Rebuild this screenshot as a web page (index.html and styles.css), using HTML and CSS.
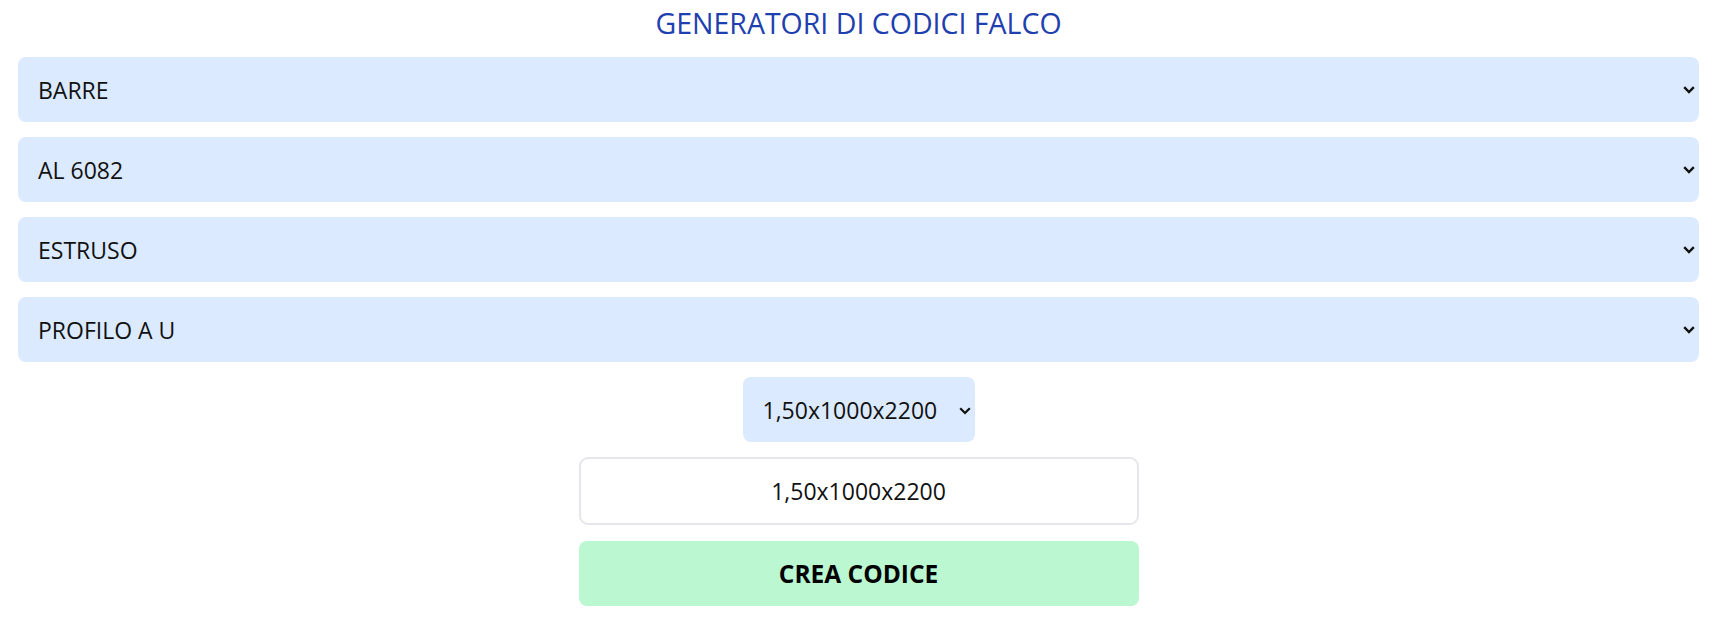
FILE: index.html
```html
<!DOCTYPE html>
<html lang="it">
<head>
<meta charset="utf-8">
<title>Generatori di codici Falco</title>
<link rel="stylesheet" href="styles.css">
</head>
<body>
<div class="page">
  <h1 class="title">GENERATORI DI CODICI FALCO</h1>
  <div class="selects">
    <div class="select-wrap">
      <select class="field"><option>BARRE</option></select>
      <svg class="chev" width="12" height="8" viewBox="0 0 12 8"><path d="M1.2 1.2 L6 6 L10.8 1.2" fill="none" stroke="#111" stroke-width="2.4"/></svg>
    </div>
    <div class="select-wrap">
      <select class="field"><option>AL 6082</option></select>
      <svg class="chev" width="12" height="8" viewBox="0 0 12 8"><path d="M1.2 1.2 L6 6 L10.8 1.2" fill="none" stroke="#111" stroke-width="2.4"/></svg>
    </div>
    <div class="select-wrap">
      <select class="field"><option>ESTRUSO</option></select>
      <svg class="chev" width="12" height="8" viewBox="0 0 12 8"><path d="M1.2 1.2 L6 6 L10.8 1.2" fill="none" stroke="#111" stroke-width="2.4"/></svg>
    </div>
    <div class="select-wrap">
      <select class="field"><option>PROFILO A U</option></select>
      <svg class="chev" width="12" height="8" viewBox="0 0 12 8"><path d="M1.2 1.2 L6 6 L10.8 1.2" fill="none" stroke="#111" stroke-width="2.4"/></svg>
    </div>
  </div>
  <div class="lower">
    <div class="select-wrap small">
      <select class="field"><option>1,50x1000x2200</option></select>
      <svg class="chev" width="12" height="8" viewBox="0 0 12 8"><path d="M1.2 1.2 L6 6 L10.8 1.2" fill="none" stroke="#111" stroke-width="2.2"/></svg>
    </div>
    <input class="code" type="text" value="1,50x1000x2200">
    <button class="create" type="button">CREA CODICE</button>
  </div>
</div>
</body>
</html>
```

FILE: styles.css
```css
html, body {
  margin: 0;
  padding: 0;
  background: #ffffff;
}
body {
  font-family: "Open Sans", "Noto Sans", sans-serif;
  color: #111111;
}
.page {
  padding: 3px 19px 0 18px;
}
.title {
  margin: 0 0 14px 0;
  font-size: 28.5px;
  line-height: 40px;
  font-weight: 400;
  color: #1e40af;
  text-align: center;
}
.selects {
  display: flex;
  flex-direction: column;
  gap: 15px;
}
.select-wrap {
  position: relative;
}
.field {
  appearance: none;
  -webkit-appearance: none;
  display: block;
  width: 100%;
  height: 65px;
  margin: 0;
  border: none;
  border-radius: 8px;
  background: #dbeafe;
  color: #111111;
  font-family: "Open Sans", "Noto Sans", sans-serif;
  font-size: 23px;
  padding: 0 30px 0 20px;
  outline: none;
}
.chev {
  position: absolute;
  right: 4px;
  top: 29px;
}
.lower {
  margin-top: 15px;
  display: flex;
  flex-direction: column;
  align-items: center;
  gap: 15px;
}
.select-wrap.small {
  width: 232px;
}
.select-wrap.small .field {
  padding-left: 20px;
}
.select-wrap.small .chev {
  right: 4px;
  top: 30px;
}
.code {
  box-sizing: border-box;
  width: 560px;
  height: 68px;
  margin: 0;
  border: 2px solid #e5e7eb;
  border-radius: 9px;
  background: #ffffff;
  text-align: center;
  font-family: "Open Sans", "Noto Sans", sans-serif;
  font-size: 23px;
  color: #111111;
  outline: none;
}
.create {
  width: 560px;
  height: 65px;
  margin: 1px 0 0 0;
  border: none;
  border-radius: 8px;
  background: #bbf7d0;
  color: #000000;
  font-family: "Open Sans", "Noto Sans", sans-serif;
  font-size: 24.5px;
  font-weight: 700;
}
```
